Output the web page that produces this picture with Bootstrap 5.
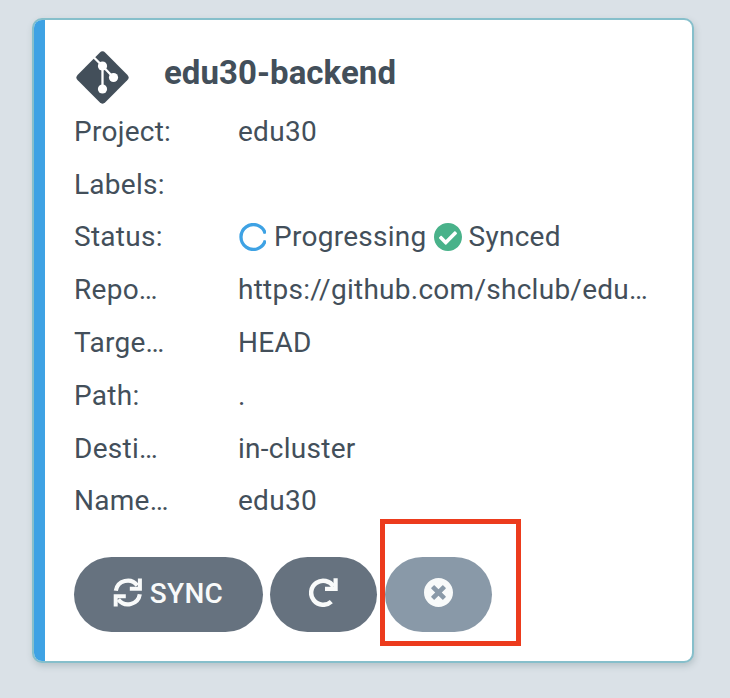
<!DOCTYPE html>
<html lang="en">
<head>
<meta charset="utf-8">
<meta name="viewport" content="width=device-width, initial-scale=1">
<title>Applications</title>
<link href="https://cdn.jsdelivr.net/npm/bootstrap@5.3.0/dist/css/bootstrap.min.css" rel="stylesheet">
<style>
body{background:#dae1e7;font-family:Roboto,sans-serif;font-size:28px;color:#434f5a;height:698px;overflow:hidden;padding:18px 36px 0 32px}
.app-tile{height:645px;border:2px solid #86bfcb;border-radius:10px;box-shadow:1px 3px 6px rgba(100,125,130,.3);overflow:hidden}
.status-bar{width:11px;background:#3ea2e4}
.tile-body{padding:29px 40px 0 29px;min-width:0}
.tile-head{height:57px}
.app-name{font-size:33px;font-weight:700;line-height:38px;letter-spacing:.05px;margin:5px 0 0 34px}
.git-icon{width:56px;height:56px}
.prop{height:52.75px;line-height:52.75px;letter-spacing:.27px}
.prop-state{line-height:50px}
.prop-key{width:97px;margin-right:67px;flex-shrink:0}
.state-icon{width:28px;height:28px}
.state-synced{margin:0 7px}
.prop-state>div:last-child{height:50px}
.action{height:75px;border-radius:38px;background:#66727f;color:#f8fafa;border:0;font-size:28px;font-weight:500;padding:0 0 4px}
.action-sync{width:189px;margin-right:-1px}
.action-sync span{padding-top:2px;letter-spacing:.3px;margin-left:7px}
.action-icon{width:107px}
.action-muted{background:#8999a8}
.action svg{width:29px;height:29px}
.focus-box{width:141px;height:127px;left:380px;top:519px;border:5px solid #ec3b1d}
.tile-actions{gap:8px;margin-top:29px}
</style>
<script src="https://cdn.jsdelivr.net/npm/bootstrap@5.3.0/dist/js/bootstrap.bundle.min.js"></script>
</head>
<body>
<main class="app-tile bg-white d-flex">
<div class="status-bar flex-shrink-0"></div>
<div class="tile-body flex-grow-1">
<header class="tile-head d-flex">
<svg class="git-icon" viewBox="0 0 56 56"><rect x="9" y="9" width="39" height="39" rx="4" fill="#434f5a" transform="rotate(45 28.5 28.5)"/><path d="M19 7.500L28.500 17L39.500 28.500M28.500 17V40" fill="none" stroke="#fff" stroke-width="2.300"/><g fill="#fff"><circle cx="28.500" cy="17" r="4.600"/><circle cx="39.500" cy="28.500" r="4.600"/><circle cx="28.500" cy="40" r="4.600"/></g></svg>
<h1 class="app-name">edu30-backend</h1>
</header>
<div class="prop d-flex"><div class="prop-key">Project:</div><div>edu30</div></div>
<div class="prop d-flex"><div class="prop-key">Labels:</div></div>
<div class="prop prop-state d-flex"><div class="prop-key">Status:</div><div class="d-flex align-items-center">
<svg class="state-icon me-2" viewBox="0 0 28 28"><path d="M27.300 10.600A12.400 12.400 0 1 0 27.300 17.400" fill="none" stroke="#3ea2e4" stroke-width="3.300"/></svg><span>Progressing</span>
<svg class="state-icon state-synced" viewBox="8 8 496 496"><path fill="#49b28a" d="M504 256c0 136.967-111.033 248-248 248S8 392.967 8 256 119.033 8 256 8s248 111.033 248 248zM227.314 387.314l184-184c6.248-6.248 6.248-16.379 0-22.627l-22.627-22.627c-6.248-6.249-16.379-6.249-22.628 0L216 308.118l-70.059-70.059c-6.248-6.248-16.379-6.248-22.628 0l-22.627 22.627c-6.248 6.248-6.248 16.379 0 22.627l104 104c6.249 6.249 16.379 6.249 22.628.001z"/></svg><span>Synced</span></div></div>
<div class="prop d-flex"><div class="prop-key">Repo…</div><div>https://github.com/shclub/edu…</div></div>
<div class="prop d-flex"><div class="prop-key">Targe…</div><div>HEAD</div></div>
<div class="prop d-flex"><div class="prop-key">Path:</div><div>.</div></div>
<div class="prop d-flex"><div class="prop-key">Desti…</div><div>in-cluster</div></div>
<div class="prop d-flex"><div class="prop-key">Name…</div><div>edu30</div></div>
<div class="tile-actions d-flex">
<button class="action action-sync d-flex align-items-center justify-content-center"><svg viewBox="0.700 0 29 29" overflow="visible" fill="none" stroke="currentColor" stroke-width="4.200"><path d="M2.500 12.800A12 12 0 0 1 24 7.500M26.500 16.200A12 12 0 0 1 5 21.500"/><path d="M16.500 10.800H26.600V.5M12.500 18.200H2.400V28.500" stroke-width="4"/></svg><span>SYNC</span></button>
<button class="action action-icon d-flex align-items-center justify-content-center" aria-label="Refresh"><svg viewBox="0 0 29 29" fill="none" stroke="currentColor" stroke-width="4.500"><path d="M24.500 8.700A12 12 0 1 0 22.300 23.600"/><path d="M16 10.800H26.600V.3" stroke-width="4.200"/></svg></button>
<button class="action action-icon action-muted d-flex align-items-center justify-content-center" aria-label="Delete"><svg viewBox="8 8 496 496"><path fill="currentColor" d="M256 8C119 8 8 119 8 256s111 248 248 248 248-111 248-248S393 8 256 8zm121.600 313.100c4.700 4.700 4.700 12.300 0 17L338 377.600c-4.700 4.700-12.300 4.700-17 0L256 312l-65.100 65.600c-4.700 4.700-12.300 4.700-17 0L134.400 338c-4.700-4.700-4.700-12.300 0-17l65.600-65-65.600-65.100c-4.700-4.700-4.700-12.300 0-17l39.600-39.600c4.700-4.700 12.300-4.700 17 0l65 65.700 65.100-65.600c4.700-4.700 12.300-4.700 17 0l39.600 39.600c4.700 4.700 4.700 12.300 0 17L312 256l65.600 65.100z"/></svg></button>
</div>
</div>
</main>
<div class="focus-box position-absolute"></div>
</body>
</html>
